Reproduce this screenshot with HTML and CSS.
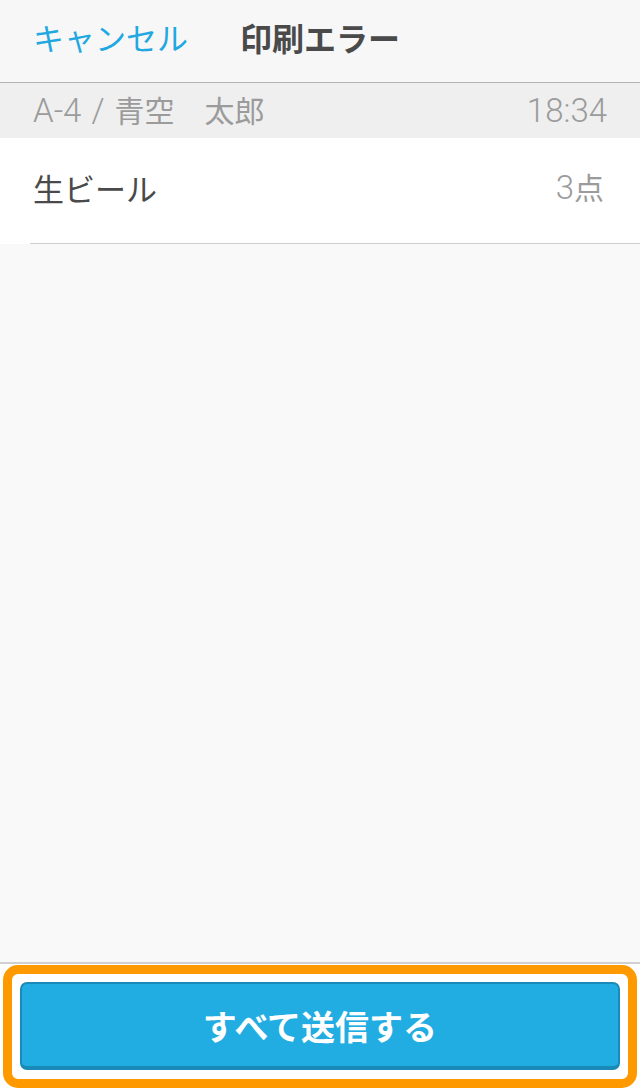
FILE: index.html
```html
<!DOCTYPE html>
<html lang="ja">
<head>
<meta charset="utf-8">
<title>印刷エラー</title>
<link rel="stylesheet" href="styles.css">
</head>
<body>
<div class="screen">
  <header class="navbar">
    <span class="nav-cancel">キャンセル</span>
    <span class="nav-title">印刷エラー</span>
  </header>
  <div class="section-head">
    <span class="sh-left"><span class="latin code">A-4 / </span>青空　太郎</span>
    <span class="sh-right latin">18:34</span>
  </div>
  <div class="item-row">
    <div class="item-inner">
      <span class="item-name">生ビール</span>
      <span class="item-qty"><span class="latin">3</span>点</span>
    </div>
  </div>
  <div class="spacer"></div>
  <footer class="footer">
    <div class="highlight">
      <button class="send-btn">すべて送信する</button>
    </div>
  </footer>
</div>
</body>
</html>
```
FILE: styles.css
```css
html, body {
  margin: 0;
  padding: 0;
}
body {
  width: 640px;
  height: 1090px;
  background: #f9f9f9;
  font-family: "Noto Sans CJK JP", "Noto Sans", sans-serif;
  overflow: hidden;
}
.screen {
  display: flex;
  flex-direction: column;
  height: 1090px;
}
.navbar {
  box-sizing: border-box;
  background: #f7f7f7;
  border-bottom: 1px solid #b2b2b2;
  display: flex;
  align-items: center;
  padding-left: 33px;
  gap: 52px;
  flex: none;
  height: 83px;
}
.nav-cancel {
  color: #22a8e0;
  font-size: 31px;
  line-height: 1;
  margin-top: -9px;
}
.nav-title {
  color: #4a4a4a;
  font-size: 32px;
  font-weight: 700;
  line-height: 1;
  margin-top: -9px;
}
.section-head {
  height: 55px;
  background: #efefef;
  display: flex;
  align-items: center;
  justify-content: space-between;
  padding: 0 33px;
  color: #9b9b9b;
  font-size: 30px;
  flex: none;
}
.latin {
  font-family: "Roboto", "Noto Sans CJK JP", sans-serif;
  font-weight: 300;
  font-size: 33px;
}
.code {
  word-spacing: 2px;
}
.sh-left, .sh-right {
  line-height: 1;
  margin-top: 0;
}
.item-row {
  background: #fff;
  height: 106px;
  box-sizing: border-box;
  padding-left: 30px;
  flex: none;
}
.item-inner {
  height: 106px;
  box-sizing: border-box;
  border-bottom: 1px solid #cfcfcf;
  display: flex;
  align-items: center;
  justify-content: space-between;
  padding: 0 36px 0 3px;
}
.item-name {
  color: #4a4a4a;
  font-size: 31px;
  line-height: 1;
  margin-top: -6px;
}
.item-qty {
  color: #9b9b9b;
  font-size: 30px;
  line-height: 1;
  margin-top: -6px;
}
.spacer {
  flex: 1;
  background: #f9f9f9;
}
.footer {
  flex: none;
  height: 128px;
  box-sizing: border-box;
  background: #fff;
  border-top: 2px solid #d0d0d0;
  padding: 1px 3px 2px 3px;
}
.highlight {
  box-sizing: border-box;
  height: 123px;
  border: 9px solid #ff9900;
  border-radius: 15px;
  background: #fff;
  padding: 8px 8px 9px 8px;
  display: flex;
}
.send-btn {
  flex: 1;
  margin: 0;
  border: 2px solid #1a8ab8;
  border-bottom-width: 4px;
  border-radius: 7px;
  background: #22ade2;
  color: #fff;
  font-family: "Noto Sans CJK JP", "Noto Sans", sans-serif;
  font-size: 34px;
  font-weight: 700;
  padding: 0;
  cursor: pointer;
}
```
